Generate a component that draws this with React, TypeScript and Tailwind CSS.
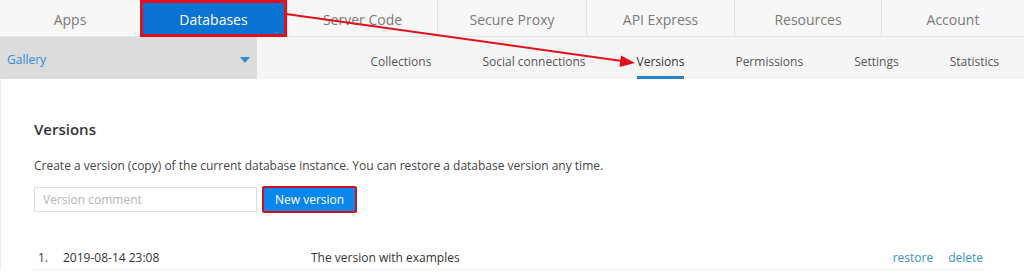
import React from 'react';

const tabs = [
  { label: 'Apps', w: 'w-[140px]' },
  { label: 'Databases', w: 'w-[147px]', active: true },
  { label: 'Server Code', w: 'w-[150px]' },
  { label: 'Secure Proxy', w: 'w-[149px]' },
  { label: 'API Express', w: 'w-[148px]' },
  { label: 'Resources', w: 'w-[147px]' },
  { label: 'Account', w: 'flex-1' },
];

const subTabs = ['Collections', 'Social connections', 'Versions', 'Permissions', 'Settings', 'Statistics'];

export default function App() {
  return (
    <div className="relative w-[1024px] h-[278px] overflow-hidden bg-white font-['Open_Sans',sans-serif]">
      {/* Top navigation */}
      <div className="flex h-[37px] bg-[#f7f7f7] border-b border-[#e6e6e6]">
        {tabs.map((t, i) =>
          t.active ? (
            <div
              key={t.label}
              className={`${t.w} h-[37px] flex items-center justify-center pt-[2px] bg-[#0b73d3] border-[3px] border-[#e3101c] text-white text-[14px]`}
            >
              {t.label}
            </div>
          ) : (
            <div
              key={t.label}
              className={`${t.w} flex items-center justify-center pt-[3px] text-[14px] text-[#7a7a7a] ${i > 1 ? 'border-l border-[#e4e4e4]' : ''}`}
            >
              {t.label}
            </div>
          )
        )}
      </div>

      {/* Sub navigation */}
      <div className="flex h-[42px] bg-[#f5f5f5]">
        <div className="w-[257px] bg-[#dcdcdc] flex items-center justify-between pl-[7px] pr-[7px] pt-[3px]">
          <span className="text-[12px] text-[#2f8ad8]">Gallery</span>
          <svg width="10" height="6" viewBox="0 0 10 6">
            <path d="M0 0 L10 0 L5 6 Z" fill="#2f8ad8" />
          </svg>
        </div>
        <div className="flex-1 flex items-center justify-end gap-[51px] pr-[25px] pt-[7px]">
          {subTabs.map((s) => (
            <span key={s} className={`relative text-[12px] ${s === 'Versions' ? 'text-[#333]' : 'text-[#555]'}`}>
              {s}
              {s === 'Versions' && <span className="absolute left-0 right-0 bottom-[-8px] h-[3px] bg-[#2f7fc8]" />}
            </span>
          ))}
        </div>
      </div>

      {/* Content */}
      <div className="border-l border-[#ececec] pl-[33px] pr-[34px] pt-[40px]">
        <h2 className="text-[15px] font-semibold text-[#333] leading-[20px]">Versions</h2>
        <p className="mt-[19px] text-[12px] text-[#444] leading-[16px]">
          Create a version (copy) of the current database instance. You can restore a database version any time.
        </p>
        <div className="mt-[12px] flex items-center gap-[5px]">
          <input
            placeholder="Version comment"
            className="w-[223px] h-[25px] border border-[#dedede] px-[8px] text-[12px] placeholder:text-[#b5b5b5] outline-none"
          />
          <button className="h-[27px] px-[11px] bg-[#0b86ea] border-[2px] border-[#d0101c] rounded-[2px] text-white text-[12px]">
            New version
          </button>
        </div>
        <div className="mt-[34px] flex items-center h-[23px] border-b border-[#eeeeee] w-[951px] text-[12px] text-[#333]">
          <span className="w-[29px] pl-[4px]">1.</span>
          <span className="w-[248px]">2019-08-14 23:08</span>
          <span className="flex-1">The version with examples</span>
          <span className="text-[#3b8fd4] mr-[15px]">restore</span>
          <span className="text-[#3b8fd4] mr-[2px]">delete</span>
        </div>
      </div>

      {/* Annotation arrow */}
      <svg className="absolute left-0 top-0 pointer-events-none" width="1024" height="278">
        <line x1="286" y1="14" x2="622" y2="61" stroke="#e3101c" strokeWidth="2" />
        <path d="M635 63 L621 55.5 L619.5 67 Z" fill="#e3101c" />
      </svg>
    </div>
  );
}
